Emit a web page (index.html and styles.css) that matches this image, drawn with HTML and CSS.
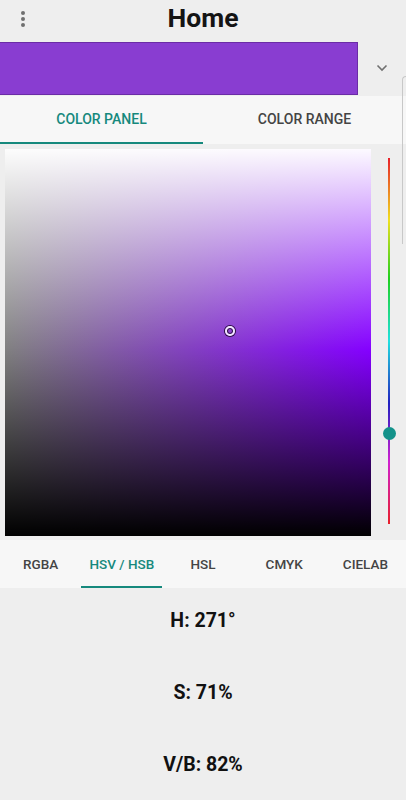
FILE: index.html
```html
<!DOCTYPE html>
<html>
<head>
<meta charset="utf-8">
<link rel="stylesheet" href="styles.css">
</head>
<body>
<div class="app">
  <header class="topbar">
    <div class="menu">
      <svg width="6" height="18" viewBox="0 0 6 18"><circle cx="3" cy="3" r="2" fill="#6f6f6f"/><circle cx="3" cy="9" r="2" fill="#6f6f6f"/><circle cx="3" cy="15" r="2" fill="#6f6f6f"/></svg>
    </div>
    <h1 class="title">Home</h1>
  </header>
  <div class="picker-row">
    <div class="swatch"></div>
    <div class="chevron">
      <svg width="12" height="8" viewBox="0 0 12 8"><path d="M1.5 1.5 L6 6 L10.5 1.5" fill="none" stroke="#707070" stroke-width="1.6"/></svg>
    </div>
  </div>
  <div class="edge"></div>
  <nav class="tabs top-tabs">
    <div class="tab active">COLOR PANEL</div>
    <div class="tab">COLOR RANGE</div>
  </nav>
  <section class="panel-area">
    <div class="sv-square">
      <div class="sv-light"></div>
      <div class="marker"></div>
    </div>
    <div class="hue-col">
      <div class="hue-line"></div>
      <div class="hue-knob"></div>
    </div>
  </section>
  <nav class="tabs model-tabs">
    <div class="tab">RGBA</div>
    <div class="tab active">HSV / HSB</div>
    <div class="tab">HSL</div>
    <div class="tab">CMYK</div>
    <div class="tab">CIELAB</div>
  </nav>
  <section class="values">
    <div class="value">H: 271°</div>
    <div class="value">S: 71%</div>
    <div class="value">V/B: 82%</div>
  </section>
</div>
</body>
</html>
```
FILE: styles.css
```css
* { box-sizing: border-box; }
html, body { margin: 0; padding: 0; }
body {
  background: #eeeeee;
  font-family: Roboto, "Noto Sans", sans-serif;
  width: 406px;
  height: 800px;
  overflow: hidden;
}
.app { position: relative; width: 406px; }
.topbar {
  height: 42px;
  position: relative;
  display: flex;
  align-items: center;
  justify-content: center;
}
.menu {
  position: absolute;
  left: 20px;
  top: 10px;
  width: 6px;
  height: 18px;
  display: flex;
}
.title {
  margin: 0;
  font-size: 26.5px;
  font-weight: 700;
  color: #141414;
  line-height: 1;
  margin-top: -5px;
}
.picker-row {
  height: 54px;
  display: flex;
  align-items: flex-start;
}
.swatch {
  width: 358px;
  height: 53px;
  background: #893dd1;
  border: 1px solid #6b2ca6;
  border-left: none;
}
.chevron {
  flex: 1;
  display: flex;
  justify-content: center;
  padding-top: 22px;
  padding-left: 0;
}
.edge {
  position: absolute;
  left: 402px;
  top: 76px;
  width: 10px;
  height: 168px;
  border-left: 1px solid #c8c8c8;
  border-top: 1px solid #c8c8c8;
  border-top-left-radius: 4px;
  pointer-events: none;
}
.tabs {
  display: flex;
  background: #f7f7f7;
  height: 48px;
}
.tab {
  flex: 1;
  display: flex;
  align-items: center;
  justify-content: center;
  font-size: 13.5px;
  font-weight: 500;
  color: #444444;
  border-bottom: 2px solid transparent;
  padding-top: 2px;
}
.tab.active {
  color: #16897d;
  border-bottom-color: #16897d;
}
.top-tabs .tab { font-size: 14px; padding-top: 0; }
.panel-area {
  height: 396px;
  display: flex;
  padding: 5px 0 0 5px;
}
.sv-square {
  position: relative;
  width: 366px;
  height: 387px;
  background: linear-gradient(to right, #808080, #8400ff);
}
.sv-light {
  position: absolute;
  inset: 0;
  background: linear-gradient(to bottom,
    rgba(255,255,255,0.98) 0%,
    rgba(255,255,255,0) 52%,
    rgba(0,0,0,0) 52%,
    rgba(0,0,0,1) 100%);
}
.marker {
  position: absolute;
  left: 220px;
  top: 177px;
  width: 10px;
  height: 10px;
  border-radius: 50%;
  border: 2px solid #f2e8ff;
  box-shadow: 0 0 0 1px #2a1040, inset 0 0 0 1px #2a1040;
}
.hue-col {
  position: relative;
  flex: 1;
}
.hue-line {
  position: absolute;
  left: 17px;
  top: 9px;
  width: 2px;
  height: 366px;
  background: linear-gradient(to bottom, #e8202a 0%, #f0e020 17%, #20d020 33%, #20e0e0 50%, #2020c0 67%, #d020d0 83%, #e8202a 100%);
}
.hue-knob {
  position: absolute;
  left: 12px;
  top: 278px;
  width: 13px;
  height: 13px;
  border-radius: 50%;
  background: #13928a;
}
.model-tabs .tab { font-size: 13.5px; }
.values {
  display: flex;
  flex-direction: column;
  align-items: center;
  padding-top: 20px;
}
.value {
  height: 72px;
  font-size: 19.5px;
  font-weight: 700;
  color: #111111;
  line-height: 26px;
}
```
